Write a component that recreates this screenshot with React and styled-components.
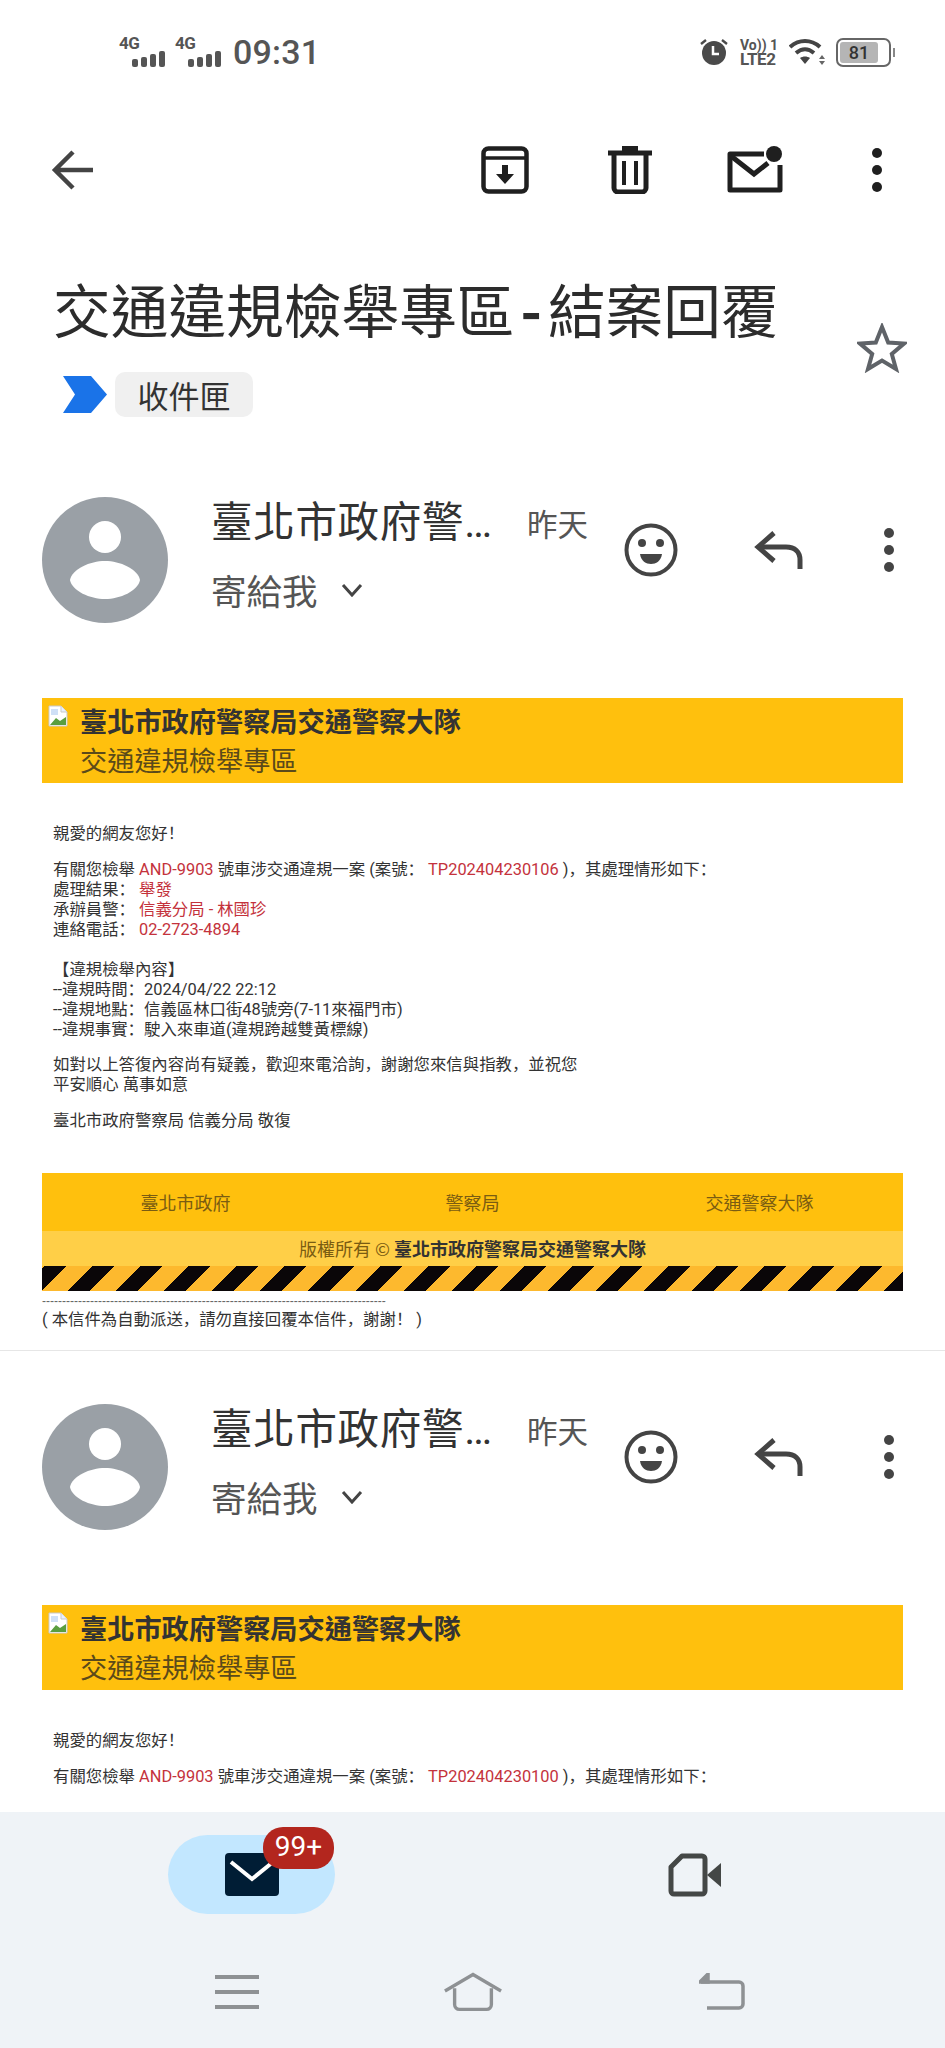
import React from 'react';
import styled, { createGlobalStyle } from 'styled-components';

const Global = createGlobalStyle`
  html, body { margin: 0; padding: 0; background: #fff; }
  body { font-family: Roboto, "Noto Sans CJK TC", sans-serif; }
  * { box-sizing: border-box; }
`;

const Page = styled.div`
  width: 945px; height: 2048px; display: flex; flex-direction: column;
  overflow: hidden; background: #fff; color: #333;
`;
const Scroller = styled.main`flex: 1; min-height: 0; overflow: hidden;`;

const StatusBar = styled.div`
  height: 104px; display: flex; align-items: center; padding: 0 52px 0 119px; color: #555;
`;
const Signal = styled.div`
  position: relative; width: 56px; height: 30px;
  span {
    position: absolute; left: 0; top: -3px; font: 700 17px/18px Roboto, sans-serif; color: #555; letter-spacing: -.5px;
  }
  svg { position: absolute; left: 13px; bottom: 0; }
`;
const Clock = styled.div`
  font: 500 34px/40px Roboto, sans-serif; color: #555; margin-left: 2px; letter-spacing: .2px;
`;
const StatusRight = styled.div`
  margin-left: auto; display: flex; align-items: center; gap: 11px;
`;
const Lte = styled.div`
  width: 38px; font: 700 14px/14px Roboto, sans-serif; color: #555; white-space: nowrap;
  div:last-child { font-size: 17px; line-height: 15px; letter-spacing: -.4px; }
`;
const Battery = styled.div`
  width: 55px; height: 29px; display: flex; align-items: center; position: relative;
  border: 2px solid #666; border-radius: 7px; padding: 2px; margin-right: 2px;
  &::after { content: ""; position: absolute; right: -6px; top: 8px; width: 2px; height: 9px; background: #888; }
`;
const BatteryFill = styled.div`
  height: 100%; background: #b5b5b5; border-radius: 3px; text-align: center;
  font: 500 18px/21px Roboto, sans-serif; color: #333;
`;

const Toolbar = styled.div`
  height: 132px; display: flex; align-items: center; padding: 0 38px 0 42px;
`;
const ToolActions = styled.div`margin-left: auto; display: flex; align-items: center; gap: 65px;`;
const ToolIcon = styled.div`width: 60px; height: 60px; display: flex; align-items: center; justify-content: center;`;
const ToolMore = styled(ToolIcon)`margin-left: -3px;`;

const SubjectBlock = styled.section`
  display: flex; padding: 37px 38px 27px 53px; justify-content: space-between;
`;
const Subject = styled.h1`
  margin: 0 0 29px; font: 400 57.7px/70px "Noto Sans CJK TC", sans-serif; color: #2c2c2c; white-space: nowrap;
`;
const Hyphen = styled.span`margin: 0 6px; font-weight: 700;`;
const LabelRow = styled.div`display: flex; align-items: center; margin-left: 10px; gap: 8px;`;
const Chip = styled.span`
  height: 45px; width: 138px; display: flex; align-items: center; justify-content: center;
  background: #f0f0f0; border-radius: 10px; font: 400 31px/45px "Noto Sans CJK TC", sans-serif; color: #333;
`;
const Star = styled.div`margin-top: 50px; width: 50px; height: 50px;`;

const Message = styled.article`
  padding-top: 53px;
  border-bottom: ${p => (p.$last ? 'none' : '1px solid #e6e6e6')};
`;
const Header = styled.header`height: 126px; display: flex; align-items: center; padding: 0 38px 0 42px;`;
const Avatar = styled.div`width: 126px; height: 126px; flex: none; margin-right: 43px;`;
const Info = styled.div`width: 410px; height: 126px; display: flex; flex-direction: column; flex: none;`;
const NameRow = styled.div`display: flex; align-items: center; height: 52px;`;
const Name = styled.div`
  width: 281px; font: 400 41.5px/52px Roboto, "Noto Sans CJK TC", sans-serif; color: #333; white-space: nowrap;
  letter-spacing: .7px;
`;
const DateText = styled.div`margin-left: 35px; font: 400 30.5px/52px "Noto Sans CJK TC", sans-serif; color: #555;`;
const ToRow = styled.div`
  margin-top: 15px; display: flex; align-items: center; height: 52px; gap: 23px;
  font: 400 35.5px/52px "Noto Sans CJK TC", sans-serif; color: #555;
`;
const Actions = styled.div`display: flex; align-items: center; gap: 68px; margin-bottom: 20px;`;
const ActionIcon = styled.div`width: ${p => p.$w || 60}px; height: 60px; display: flex; align-items: center; justify-content: center;`;
const ActionsMore = styled.div`margin-left: -8px;`;

const Mail = styled.div`padding: 75px 42px 0;`;
const Banner = styled.div`
  height: 85px; background: #ffc00d; display: flex; padding: 7px 0 0 6px; gap: 12px;
`;
const BrokenImg = styled.div`width: 20px; height: 22px; flex: none;`;
const BannerText = styled.div`margin-top: -3px;`;
const BannerTitle = styled.div`font: 700 27.2px/36px "Noto Sans CJK TC", sans-serif; color: #333;`;
const BannerSub = styled.div`margin-top: 3px; font: 400 27.2px/36px "Noto Sans CJK TC", sans-serif; color: #5b4a1a;`;

const Body = styled.div`padding: 41px 0 42px 11px; font: 400 16.4px/20px Roboto, "Noto Sans CJK SC", sans-serif; color: #333;`;
const Para = styled.p`margin: 0 0 ${p => p.$gap || 16}px; &:last-child { margin-bottom: 0; }`;
const Red = styled.span`color: #c4323c;`;
const Indent = styled.span`display: inline-block; width: 86px;`;

const FooterLinks = styled.div`
  height: 58px; background: #ffc00d; display: grid; grid-template-columns: repeat(3, 1fr);
  align-items: center; text-align: center; font: 400 18px/24px "Noto Sans CJK TC", sans-serif; color: #7a5c12;
`;
const Copyright = styled.div`
  height: 35px; background: #ffcf47; text-align: center; font: 400 18px/34px "Noto Sans CJK TC", sans-serif; color: #7a5c12;
  b { color: #333; font-weight: 700; }
`;
const Stripes = styled.div`
  height: 25px;
  background: repeating-linear-gradient(135deg, #fdb92e 0 2px, #0a0608 2px 17px, #fdb92e 17px 33.94px);
`;
const Dashes = styled.div`
  margin-top: 4px; height: 12px; white-space: nowrap;
  font: 400 12px/12px "Liberation Sans", sans-serif; color: #666;
`;
const Note = styled.div`
  padding: 3px 0 20px; font: 400 16.4px/20px Roboto, "Noto Sans CJK SC", sans-serif; color: #333;
`;

const BottomNav = styled.nav`height: 236px; flex: none; background: #eff3f7; display: flex; flex-direction: column;`;
const Tabs = styled.div`display: grid; grid-template-columns: 443px 443px; padding: 23px 0 0 30px; height: 130px;`;
const Tab = styled.div`display: flex; justify-content: center; align-items: flex-start;`;
const Pill = styled.div`
  position: relative; width: 167px; height: 79px; border-radius: 40px;
  background: ${p => (p.$active ? '#c2e7ff' : 'transparent')};
  display: flex; align-items: center; justify-content: center;
`;
const Badge = styled.span`
  position: absolute; left: 95px; top: -8px; width: 71px; height: 42px; border-radius: 20px;
  background: #b3261e; color: #fff; font: 400 28px/40px Roboto, sans-serif; text-align: center;
`;
const SystemNav = styled.div`
  display: grid; grid-template-columns: 236px 249px 60px; padding: 28px 0 0 207px; align-items: center;
`;
const SysIcon = styled.div`width: 60px; height: 44px; display: flex; align-items: center; justify-content: center;`;

const Bars = () => (
  <svg width="34" height="16" viewBox="0 0 34 16" fill="#555">
    <rect x="0" y="8" width="6" height="8" rx="2" /><rect x="9" y="6" width="6" height="10" rx="2" />
    <rect x="18" y="3" width="6" height="13" rx="2" /><rect x="27" y="0" width="6" height="16" rx="2" />
  </svg>
);

const Alarm = () => (
  <svg width="30" height="28" viewBox="0 0 30 28">
    <circle cx="15" cy="15" r="12" fill="#4a4a4a" />
    <path d="M14 8v8h6" stroke="#fff" strokeWidth="2.5" fill="none" />
    <path d="M2 6l5-4M28 6l-5-4" stroke="#4a4a4a" strokeWidth="2.4" />
  </svg>
);
const Wifi = () => (
  <svg width="36" height="28" viewBox="0 0 36 28" fill="none" stroke="#444">
    <path d="M1 9c9-8 21-8 30 0" strokeWidth="4" />
    <path d="M7 15c6-5 12-5 18 0" strokeWidth="4" />
    <path d="M16 26l-5-6c3-2 7-2 10 0z" fill="#444" stroke="none" />
    <path d="M33 17l-3 4h6zM33 27l-3-4h6z" fill="#666" stroke="none" />
  </svg>
);

const Person = () => (
  <svg width="126" height="126" viewBox="0 0 126 126">
    <circle cx="63" cy="63" r="63" fill="#9aa0a6" />
    <circle cx="63" cy="40" r="16" fill="#fff" />
    <path d="M28 83C30 72 48 64 63 64s33 8 35 19c-2 11-20 19-35 19s-33-8-35-19z" fill="#fff" />
  </svg>
);
const Smile = () => (
  <svg width="54" height="54" viewBox="0 0 54 54">
    <circle cx="27" cy="27" r="24.5" fill="none" stroke="#444" strokeWidth="4" />
    <circle cx="18" cy="20" r="4" fill="#444" /><circle cx="36" cy="20" r="4" fill="#444" />
    <path d="M16 31h22c-1 7-6 10-11 10s-10-3-11-10z" fill="#444" />
  </svg>
);
const Reply = () => (
  <svg width="50" height="40" viewBox="0 0 50 40" fill="none" stroke="#444" strokeWidth="5">
    <path d="M20 3L4 17l16 14" />
    <path d="M5 17h27c9 0 14 5 14 13v9" />
  </svg>
);
const Dots = ({ c = '#444', r = 5, gap = 17 }) => (
  <svg width="14" height={gap * 2 + 14} viewBox={`0 0 14 ${gap * 2 + 14}`} fill={c}>
    <circle cx="7" cy="7" r={r} /><circle cx="7" cy={7 + gap} r={r} /><circle cx="7" cy={7 + gap * 2} r={r} />
  </svg>
);
const Chevron = () => (
  <svg width="22" height="14" viewBox="0 0 22 14" fill="none" stroke="#444" strokeWidth="3">
    <path d="M2 2l9 10 9-10" />
  </svg>
);
const Broken = () => (
  <svg width="20" height="22" viewBox="0 0 20 22">
    <path d="M1 1h12l6 6v14H1z" fill="#fff" stroke="#c9c9c9" />
    <path d="M13 1v6h6" fill="#e8f0fe" stroke="#c9c9c9" />
    <path d="M2 20l6-7 4 3 6-4v8z" fill="#5a9e3f" />
    <path d="M3 4h7v6H3z" fill="#cfe0f7" />
  </svg>
);

const MessageBlock = ({ caseNo, full, last }) => (
  <Message $last={last}>
    <Header>
      <Avatar><Person /></Avatar>
      <Info>
        <NameRow>
          <Name>臺北市政府警…</Name>
          <DateText>昨天</DateText>
        </NameRow>
        <ToRow>寄給我 <Chevron /></ToRow>
      </Info>
      <Actions>
        <ActionIcon><Smile /></ActionIcon>
        <ActionIcon><Reply /></ActionIcon>
        <ActionsMore><ActionIcon $w={40}><Dots /></ActionIcon></ActionsMore>
      </Actions>
    </Header>
    <Mail>
      <Banner>
        <BrokenImg><Broken /></BrokenImg>
        <BannerText>
          <BannerTitle>臺北市政府警察局交通警察大隊</BannerTitle>
          <BannerSub>交通違規檢舉專區</BannerSub>
        </BannerText>
      </Banner>
      <Body>
        <Para>親愛的網友您好！</Para>
        <Para $gap={20}>
          有關您檢舉 <Red>AND-9903</Red> 號車涉交通違規一案 (案號： <Red>TP{caseNo}</Red> )，其處理情形如下：
          {full && (
            <>
              <br /><Indent>處理結果：</Indent><Red>舉發</Red>
              <br /><Indent>承辦員警：</Indent><Red>信義分局 - 林國珍</Red>
              <br /><Indent>連絡電話：</Indent><Red>02-2723-4894</Red>
            </>
          )}
        </Para>
        {full && (
          <>
            <Para $gap={15}>
              【違規檢舉內容】<br />
              --違規時間：2024/04/22 22:12<br />
              --違規地點：信義區林口街48號旁(7-11來福門市)<br />
              --違規事實：駛入來車道(違規跨越雙黃標線)
            </Para>
            <Para>如對以上答復內容尚有疑義，歡迎來電洽詢，謝謝您來信與指教，並祝您<br />平安順心 萬事如意</Para>
            <Para>臺北市政府警察局 信義分局 敬復</Para>
          </>
        )}
      </Body>
      {full && (
        <>
          <FooterLinks><span>臺北市政府</span><span>警察局</span><span>交通警察大隊</span></FooterLinks>
          <Copyright>版權所有 © <b>臺北市政府警察局交通警察大隊</b></Copyright>
          <Stripes />
          <Dashes>{'-'.repeat(86)}</Dashes>
          <Note>( 本信件為自動派送，請勿直接回覆本信件，謝謝！ )</Note>
        </>
      )}
    </Mail>
  </Message>
);

export default function App() {
  return (
    <Page>
      <Global />
      <Scroller>
        <StatusBar>
          <Signal><span>4G</span><Bars /></Signal>
          <Signal><span>4G</span><Bars /></Signal>
          <Clock>09:31</Clock>
          <StatusRight>
            <Alarm />
            <Lte><div>Vo)) 1</div><div>LTE2</div></Lte>
            <Wifi />
            <Battery><BatteryFill style={{ width: '81%' }}>81</BatteryFill></Battery>
          </StatusRight>
        </StatusBar>
        <Toolbar>
          <ToolIcon>
            <svg width="42" height="42" viewBox="0 0 42 42" fill="none" stroke="#444" strokeWidth="4.5">
              <path d="M22 3L4 21l18 18M4 21h38" />
            </svg>
          </ToolIcon>
          <ToolActions>
            <ToolIcon>
              <svg width="48" height="48" viewBox="0 0 48 48">
                <rect x="2.5" y="2.5" width="43" height="43" rx="5" fill="none" stroke="#1f1f1f" strokeWidth="4.5" />
                <path d="M2 12h44" stroke="#1f1f1f" strokeWidth="3.5" />
                <path d="M21 19h6v9h6L24 38l-9-10h6z" fill="#1f1f1f" />
              </svg>
            </ToolIcon>
            <ToolIcon>
              <svg width="44" height="48" viewBox="0 0 44 48" fill="none" stroke="#1f1f1f">
                <path d="M0 7h44M14 2h16" strokeWidth="5" />
                <path d="M6 8v34a4 4 0 0 0 4 4h24a4 4 0 0 0 4-4V8" strokeWidth="5" />
                <path d="M16 15v24M28 15v24" strokeWidth="4" />
              </svg>
            </ToolIcon>
            <ToolIcon>
              <svg width="56" height="50" viewBox="0 0 56 50" fill="none">
                <path d="M37 9H3v36h50V20" stroke="#1f1f1f" strokeWidth="5" strokeLinejoin="round" />
                <path d="M4 11l23 18 14-11" stroke="#1f1f1f" strokeWidth="5" />
                <circle cx="47" cy="9" r="8" fill="#1f1f1f" />
              </svg>
            </ToolIcon>
            <ToolMore><Dots c="#1f1f1f" /></ToolMore>
          </ToolActions>
        </Toolbar>
        <SubjectBlock>
          <div>
            <Subject>交通違規檢舉專區<Hyphen>-</Hyphen>結案回覆</Subject>
            <LabelRow>
              <svg width="44" height="37" viewBox="0 0 44 37"><path d="M0 0h28l16 18.5L28 37H0l12-18.5z" fill="#1a73e8" /></svg>
              <Chip>收件匣</Chip>
            </LabelRow>
          </div>
          <Star>
            <svg width="50" height="50" viewBox="0 0 50 50" fill="none" stroke="#5f6368" strokeWidth="4">
              <path d="M25 4l6.2 15.6L47 20.6 34.8 31 39 46 25 37.5 11 46l4.2-15L3 20.6l15.8-1z" />
            </svg>
          </Star>
        </SubjectBlock>
        <MessageBlock caseNo="202404230106" full />
        <MessageBlock caseNo="202404230100" last />
      </Scroller>
      <BottomNav>
        <Tabs>
          <Tab>
            <Pill $active>
              <svg width="54" height="43" viewBox="0 0 54 43">
                <rect width="54" height="43" rx="4" fill="#001d35" />
                <path d="M6 9l21 17 21-17" fill="none" stroke="#fff" strokeWidth="4" />
              </svg>
              <Badge>99+</Badge>
            </Pill>
          </Tab>
          <Tab>
            <Pill>
              <svg width="54" height="44" viewBox="0 0 54 44" fill="none">
                <path d="M14 3h20a3 3 0 0 1 3 3v32a3 3 0 0 1-3 3H6a3 3 0 0 1-3-3V14z" stroke="#444746" strokeWidth="5" strokeLinejoin="round" />
                <path d="M39 22l14-12v24z" fill="#444746" />
              </svg>
            </Pill>
          </Tab>
        </Tabs>
        <SystemNav>
          <SysIcon>
            <svg width="44" height="34" viewBox="0 0 44 34" stroke="#8e9194" strokeWidth="4"><path d="M0 2h44M0 17h44M0 32h44" /></svg>
          </SysIcon>
          <SysIcon>
            <svg width="62" height="40" viewBox="0 0 62 40" fill="none" stroke="#8e9194" strokeWidth="3.5">
              <path d="M2 19L31 2l29 17" />
              <path d="M12 16v17a5 5 0 0 0 5 5h28a5 5 0 0 0 5-5V16" />
            </svg>
          </SysIcon>
          <SysIcon>
            <svg width="46" height="38" viewBox="0 0 46 38" fill="none" stroke="#8e9194" strokeWidth="3.5">
              <path d="M2 9h38a4 4 0 0 1 4 4v18a4 4 0 0 1-4 4H8" />
              <path d="M9 1L1 9l8 0z" fill="#8e9194" />
            </svg>
          </SysIcon>
        </SystemNav>
      </BottomNav>
    </Page>
  );
}
